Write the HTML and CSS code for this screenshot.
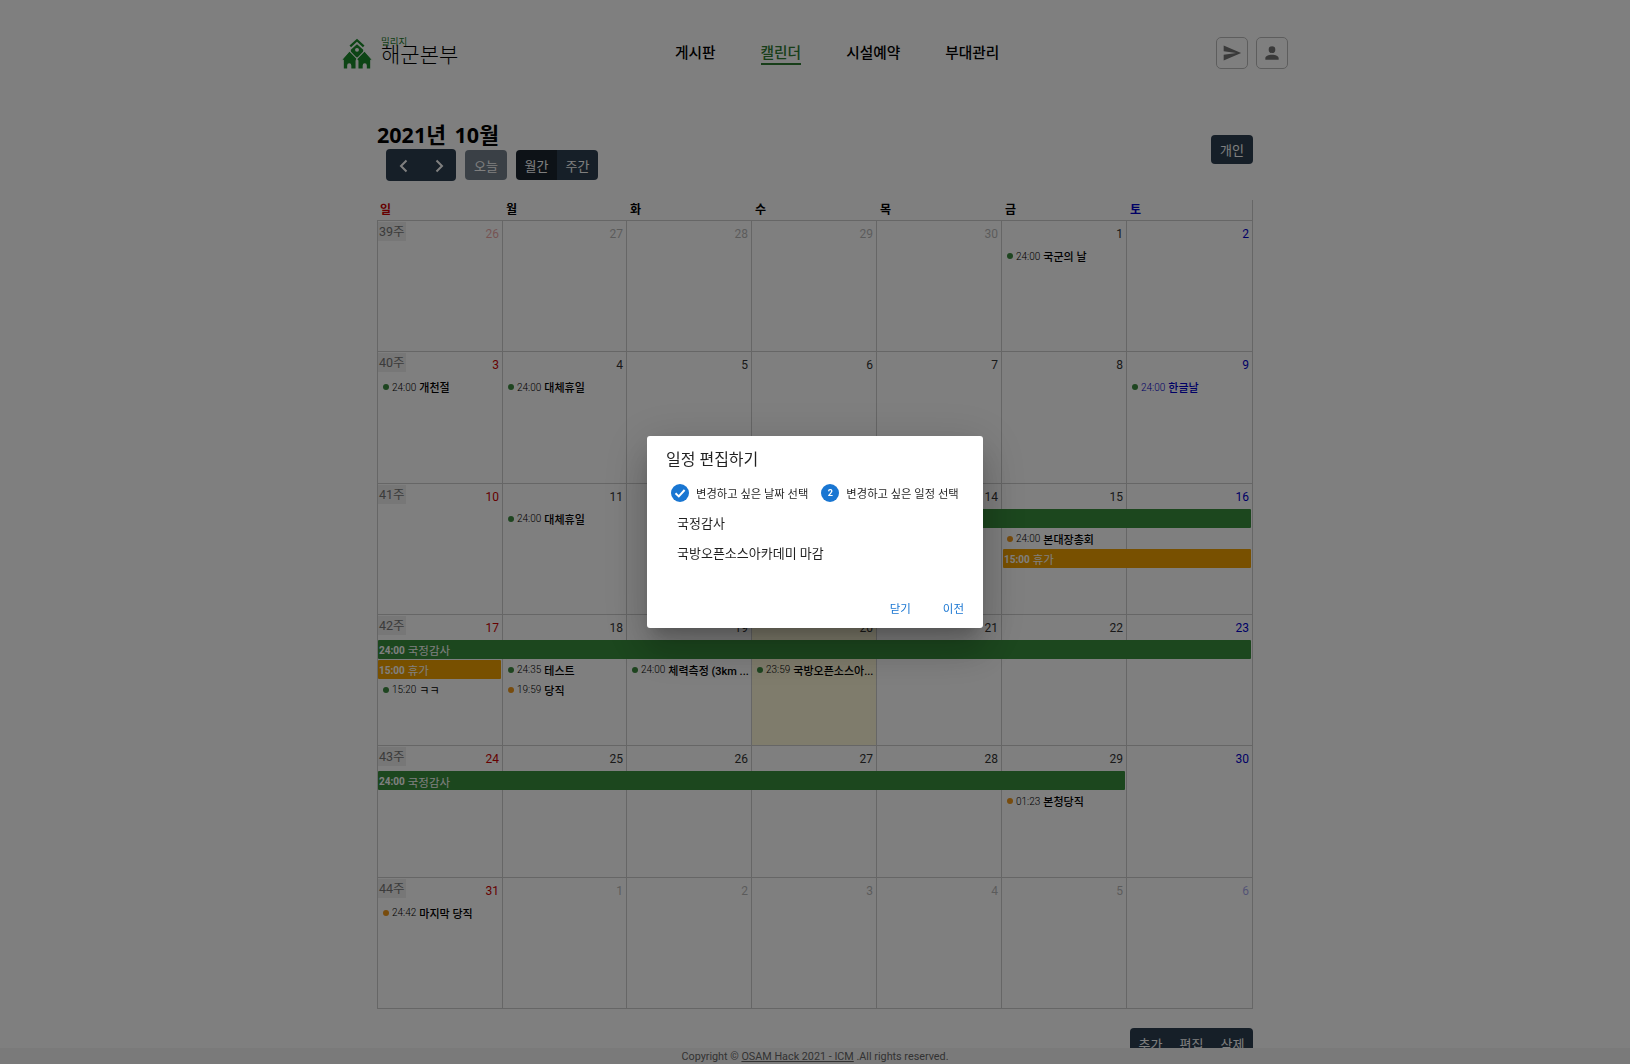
FILE: index.html
```html
<!DOCTYPE html>
<html lang="ko">
<head>
    <meta charset="UTF-8">
    <meta name="viewport" content="width=device-width, initial-scale=1.0">
    <title>밀리지 해군본부 - 캘린더</title>
    <link rel="stylesheet" href="styles.css">
</head>
<body>
    <header class="topbar">
        <a class="brand">
            <svg class="brand-logo" viewBox="0 0 29 29">
                <path d="M8 7.2 L14.5 1.2 L21 7.2" fill="none" stroke="#1b8a2a" stroke-width="2.2"/>
                <path d="M14.5 5 L20.5 10.5 V18 H8.5 V10.5 Z" fill="#1b8a2a"/>
                <circle cx="14.5" cy="10.5" r="1.9" fill="#fff"/>
                <path d="M7.2 11.5 L15 19.5 L13.6 20.9 V29 H1.2 V20.5 H-0.6 Z" fill="#1b8a2a" stroke="#fff" stroke-width="1"/>
                <path d="M21.8 11.5 L14 19.5 L15.4 20.9 V29 H27.8 V20.5 H29.6 Z" fill="#1b8a2a" stroke="#fff" stroke-width="1"/>
                <path d="M5 29 V25.5 A2 2 0 0 1 9 25.5 V29 Z M20 29 V25.5 A2 2 0 0 1 24 25.5 V29 Z" fill="#fff"/>
            </svg>
            <span class="brand-text">
                <span class="brand-sub">밀리지</span>
                <span class="brand-name">해군본부</span>
            </span>
        </a>
        <nav class="nav">
            <a>게시판</a>
            <a class="active">캘린더</a>
            <a>시설예약</a>
            <a>부대관리</a>
        </nav>
        <div class="top-actions">
            <button class="icon-btn"><svg viewBox="0 0 24 24"><path d="M2,21L23,12L2,3V10L17,12L2,14V21Z"/></svg></button>
            <button class="icon-btn"><svg viewBox="0 0 24 24"><path d="M12,4A4,4 0 0,1 16,8A4,4 0 0,1 12,12A4,4 0 0,1 8,8A4,4 0 0,1 12,4M12,14C16.42,14 20,15.79 20,18V20H4V18C4,15.79 7.58,14 12,14Z"/></svg></button>
        </div>
    </header>

    <main class="calendar">
        <div class="toolbar">
            <div class="toolbar-left">
                <h2>2021년 10월</h2>
                <div class="toolbar-btns">
                    <div class="btn-group arrows">
                        <button class="btn"><svg viewBox="0 0 16 16"><path d="M10.5 2.5 L5 8 L10.5 13.5"/></svg></button>
                        <button class="btn"><svg viewBox="0 0 16 16"><path d="M5.5 2.5 L11 8 L5.5 13.5"/></svg></button>
                    </div>
                    <button class="btn today" disabled>오늘</button>
                    <div class="btn-group">
                        <button class="btn on">월간</button>
                        <button class="btn">주간</button>
                    </div>
                </div>
            </div>
            <button class="btn personal">개인</button>
        </div>

        <div class="dow">
            <div class="sun">일</div><div>월</div><div>화</div><div>수</div><div>목</div><div>금</div><div class="sat">토</div>
        </div>

        <div class="week">
            <div class="day other sun"><span class="wk">39주</span><span class="num">26</span></div>
            <div class="day other"><span class="num">27</span></div>
            <div class="day other"><span class="num">28</span></div>
            <div class="day other"><span class="num">29</span></div>
            <div class="day other"><span class="num">30</span></div>
            <div class="day"><span class="num">1</span></div>
            <div class="day sat"><span class="num">2</span></div>
            <div class="ev c6 r1"><i class="dot"></i><span class="t">24:00</span><b>국군의 날</b></div>
        </div>

        <div class="week">
            <div class="day sun"><span class="wk">40주</span><span class="num">3</span></div>
            <div class="day"><span class="num">4</span></div>
            <div class="day"><span class="num">5</span></div>
            <div class="day"><span class="num">6</span></div>
            <div class="day"><span class="num">7</span></div>
            <div class="day"><span class="num">8</span></div>
            <div class="day sat"><span class="num">9</span></div>
            <div class="ev c1 r1"><i class="dot"></i><span class="t">24:00</span><b>개천절</b></div>
            <div class="ev c2 r1"><i class="dot"></i><span class="t">24:00</span><b>대체휴일</b></div>
            <div class="ev c7 r1 blue"><i class="dot"></i><span class="t">24:00</span><b>한글날</b></div>
        </div>

        <div class="week">
            <div class="day sun"><span class="wk">41주</span><span class="num">10</span></div>
            <div class="day"><span class="num">11</span></div>
            <div class="day"><span class="num">12</span></div>
            <div class="day"><span class="num">13</span></div>
            <div class="day"><span class="num">14</span></div>
            <div class="day"><span class="num">15</span></div>
            <div class="day sat"><span class="num">16</span></div>
            <div class="ev c2 r1"><i class="dot"></i><span class="t">24:00</span><b>대체휴일</b></div>
            <div class="bar green s4-7 r1"></div>
            <div class="ev c6 r2"><i class="dot orange"></i><span class="t">24:00</span><b>본대장총회</b></div>
            <div class="bar orange s6-7 r3"><b>15:00</b><span>휴가</span></div>
        </div>

        <div class="week">
            <div class="day sun"><span class="wk">42주</span><span class="num">17</span></div>
            <div class="day"><span class="num">18</span></div>
            <div class="day"><span class="num">19</span></div>
            <div class="day now"><span class="num">20</span></div>
            <div class="day"><span class="num">21</span></div>
            <div class="day"><span class="num">22</span></div>
            <div class="day sat"><span class="num">23</span></div>
            <div class="bar green s1-7 r1"><b>24:00</b><span>국정감사</span></div>
            <div class="bar orange c1 r2"><b>15:00</b><span>휴가</span></div>
            <div class="ev c1 r3"><i class="dot"></i><span class="t">15:20</span><span class="plain">ㅋㅋ</span></div>
            <div class="ev c2 r2"><i class="dot"></i><span class="t">24:35</span><b>테스트</b></div>
            <div class="ev c2 r3"><i class="dot orange"></i><span class="t">19:59</span><b>당직</b></div>
            <div class="ev c3 r2"><i class="dot"></i><span class="t">24:00</span><b>체력측정 (3km ...</b></div>
            <div class="ev c4 r2"><i class="dot"></i><span class="t">23:59</span><b>국방오픈소스아...</b></div>
        </div>

        <div class="week">
            <div class="day sun"><span class="wk">43주</span><span class="num">24</span></div>
            <div class="day"><span class="num">25</span></div>
            <div class="day"><span class="num">26</span></div>
            <div class="day"><span class="num">27</span></div>
            <div class="day"><span class="num">28</span></div>
            <div class="day"><span class="num">29</span></div>
            <div class="day sat"><span class="num">30</span></div>
            <div class="bar green s1-6 r1"><b>24:00</b><span>국정감사</span></div>
            <div class="ev c6 r2"><i class="dot orange"></i><span class="t">01:23</span><b>본청당직</b></div>
        </div>

        <div class="week">
            <div class="day sun"><span class="wk">44주</span><span class="num">31</span></div>
            <div class="day other"><span class="num">1</span></div>
            <div class="day other"><span class="num">2</span></div>
            <div class="day other"><span class="num">3</span></div>
            <div class="day other"><span class="num">4</span></div>
            <div class="day other"><span class="num">5</span></div>
            <div class="day other sat"><span class="num">6</span></div>
            <div class="ev c1 r1"><i class="dot orange"></i><span class="t">24:42</span><b>마지막 당직</b></div>
        </div>

        <div class="cal-actions">
            <div class="btn-group">
                <button class="btn">추가</button>
                <button class="btn">편집</button>
                <button class="btn">삭제</button>
            </div>
        </div>
    </main>

    <footer class="footer">Copyright © <a>OSAM Hack 2021 - ICM</a> .All rights reserved.</footer>

    <div class="overlay"></div>

    <div class="dialog">
        <div class="dialog-title">일정 편집하기</div>
        <div class="steps">
            <div class="step">
                <span class="step-num"><svg viewBox="0 0 18 18"><path d="M4.5 9.3 L7.8 12.4 L13.6 6"/></svg></span>
                <span>변경하고 싶은 날짜 선택</span>
            </div>
            <div class="step">
                <span class="step-num">2</span>
                <span>변경하고 싶은 일정 선택</span>
            </div>
        </div>
        <ul class="dialog-list">
            <li>국정감사</li>
            <li>국방오픈소스아카데미 마감</li>
        </ul>
        <div class="dialog-actions">
            <a>닫기</a>
            <a>이전</a>
        </div>
    </div>
</body>
</html>
```

FILE: styles.css
```css
* {
    box-sizing: border-box;
}
html, body {
    height: 100%;
}
body {
    margin: 0;
    background-color: #fff;
    color: #000;
    font-family: Roboto, "Noto Sans CJK KR", sans-serif;
    overflow: hidden;
}
button {
    font-family: inherit;
}

/* top bar */
.topbar {
    display: flex;
    align-items: center;
    justify-content: space-between;
    width: 946px;
    height: 106px;
    margin: 0 auto;
}
.brand {
    display: flex;
    align-items: center;
    gap: 8px;
    padding-top: 2px;
}
.brand-logo {
    width: 30px;
    height: 30px;
    display: block;
    overflow: visible;
}
.brand-text {
    position: relative;
    display: block;
}
.brand-sub {
    position: absolute;
    top: -1px;
    left: 1px;
    font-size: 9.5px;
    line-height: 10px;
    color: #1b7a2a;
}
.brand-name {
    font-size: 21px;
    line-height: 30px;
    font-weight: 300;
    display: block;
    padding: 2px 0 0 1px;
}
.nav {
    display: flex;
    gap: 45px;
    padding-top: 2px;
}
.nav a {
    font-size: 14.7px;
    line-height: 20px;
    font-weight: 500;
}
.nav a.active {
    color: #2e7d32;
    border-bottom: 2px solid #2e7d32;
}
.top-actions {
    display: flex;
    gap: 8px;
}
.icon-btn {
    width: 32px;
    height: 32px;
    padding: 0;
    background: none;
    border: 1px solid #bbb;
    border-radius: 5px;
    display: flex;
    align-items: center;
    justify-content: center;
}
.icon-btn svg {
    width: 20px;
    height: 20px;
    fill: #757575;
}

/* calendar */
.calendar {
    width: 876px;
    margin: 0 0 0 377px;
}
.toolbar {
    display: flex;
    justify-content: space-between;
    align-items: flex-start;
    height: 94px;
    padding-top: 14px;
}
.toolbar h2 {
    margin: 0;
    font-family: "Noto Sans", "Noto Sans CJK KR", sans-serif;
    font-size: 21.5px;
    line-height: 29px;
    font-weight: 700;
    word-spacing: 3px;
}
.toolbar-btns {
    display: flex;
    align-items: center;
    gap: 9px;
    margin-left: 9px;
}
.btn {
    height: 30px;
    padding: 0 8px;
    border: none;
    background-color: #2c3e50;
    color: #fff;
    font-size: 13px;
    border-radius: 4px;
}
.btn.on {
    background-color: #1a252f;
}
.btn.today {
    opacity: 0.65;
    width: 42px;
    padding: 0;
}
.btn.personal {
    width: 42px;
    height: 29px;
    padding: 0;
    margin-top: 15px;
}
.btn-group {
    display: flex;
}
.btn-group .btn {
    width: 41px;
    padding: 0;
    border-radius: 0;
}
.btn-group .btn:first-child {
    border-radius: 4px 0 0 4px;
}
.btn-group .btn:last-child {
    border-radius: 0 4px 4px 0;
}
.arrows .btn {
    height: 32px;
}
.btn-group.arrows .btn {
    width: 35px;
}
.arrows svg {
    width: 16px;
    height: 16px;
    display: block;
    margin: 1px auto 0;
    fill: none;
    stroke: #fff;
    stroke-width: 2;
}

.dow {
    display: grid;
    grid-template-columns: 126px 124px repeat(4, 125px) 126px;
    height: 21px;
    border-right: 1px solid #ccc;
    border-bottom: 1px solid #ccc;
    font-size: 12px;
    font-weight: 700;
    line-height: 21px;
}
.dow div {
    padding-left: 3px;
}
.dow .sun {
    color: #c00;
}
.dow .sat {
    color: #00c;
}

.week {
    display: grid;
    grid-template-columns: 126px 124px repeat(4, 125px) 126px;
    grid-template-rows: 25px 20px 20px 20px 1fr;
    height: 131.33px;
    border-bottom: 1px solid #ccc;
}
.day {
    grid-row: 1 / -1;
    display: flex;
    justify-content: space-between;
    align-items: flex-start;
    border-right: 1px solid #ccc;
    padding: 3px 3px 0 0;
}
.day:nth-child(1) {
    grid-column: 1;
    border-left: 1px solid #ccc;
}
.day:nth-child(2) { grid-column: 2; }
.day:nth-child(3) { grid-column: 3; }
.day:nth-child(4) { grid-column: 4; }
.day:nth-child(5) { grid-column: 5; }
.day:nth-child(6) { grid-column: 6; }
.day:nth-child(7) { grid-column: 7; }
.day.now {
    background-color: rgba(255, 235, 130, 0.3);
}
.num {
    margin-left: auto;
    font-size: 12px;
    line-height: 20px;
    color: #333;
}
.day.sun .num {
    color: #c00;
}
.day.sat .num {
    color: #00c;
}
.day.other .num {
    opacity: 0.35;
}
.wk {
    margin-top: -2px;
    padding: 0 1px;
    background-color: #eee;
    color: #777;
    font-size: 12.5px;
    line-height: 19px;
}

.c1 { grid-column: 1; }
.c2 { grid-column: 2; }
.c3 { grid-column: 3; }
.c4 { grid-column: 4; }
.c6 { grid-column: 6; }
.c7 { grid-column: 7; }
.s1-7 { grid-column: 1 / 8; }
.s1-6 { grid-column: 1 / 7; }
.s4-7 { grid-column: 4 / 8; }
.s6-7 { grid-column: 6 / 8; }
.r1 { grid-row: 2; }
.r2 { grid-row: 3; }
.r3 { grid-row: 4; }

.ev {
    display: flex;
    align-items: center;
    min-width: 0;
    height: 20px;
    padding: 0 3px 0 5px;
    font-size: 10px;
    white-space: nowrap;
    overflow: hidden;
}
.ev.c1 {
    padding-left: 6px;
}
.ev b {
    font-size: 11px;
    font-weight: 500;
}
.ev .plain {
    font-size: 11px;
}
.ev .t {
    margin-right: 3px;
    flex: none;
    font-weight: 300;
}
.ev.blue {
    color: #00c;
}
.dot {
    flex: none;
    width: 6px;
    height: 6px;
    margin-right: 3px;
    border-radius: 50%;
    background-color: #3d8b40;
}
.dot.orange {
    background-color: #f0981a;
}
.bar {
    display: flex;
    align-items: center;
    gap: 3px;
    height: 19px;
    margin: 0 2px 0 1px;
    padding: 2px 0 0 1px;
    border-radius: 1px;
    color: #fff;
    font-size: 11.5px;
    white-space: nowrap;
    overflow: hidden;
}
.bar b {
    font-size: 10px;
}
.bar.green {
    background-color: #388e3c;
}
.bar.orange {
    background-color: #f0a000;
}

.cal-actions {
    display: flex;
    justify-content: flex-end;
    margin-top: 19px;
}
.cal-actions .btn {
    height: 32px;
}

.footer {
    position: fixed;
    left: 0;
    right: 0;
    bottom: 0;
    height: 16px;
    background-color: #f5f5f5;
    color: #666;
    font-size: 10.8px;
    line-height: 17px;
    text-align: center;
}
.footer a {
    text-decoration: underline;
}

/* dialog */
.overlay {
    position: fixed;
    inset: 0;
    background-color: rgba(0, 0, 0, 0.5);
}
.dialog {
    position: fixed;
    left: 647px;
    top: 436px;
    width: 336px;
    height: 192px;
    padding: 14px 19px 0;
    background-color: #fff;
    border-radius: 3px;
    box-shadow: 0 11px 15px -7px rgba(0, 0, 0, 0.2), 0 24px 38px 3px rgba(0, 0, 0, 0.14), 0 9px 46px 8px rgba(0, 0, 0, 0.12);
    display: flex;
    flex-direction: column;
    color: rgba(0, 0, 0, 0.87);
}
.dialog-title {
    font-size: 16px;
    line-height: 20px;
}
.steps {
    display: flex;
    gap: 13px;
    margin: 14px 0 0 5px;
}
.step {
    display: flex;
    align-items: center;
    gap: 7px;
    font-size: 11.3px;
    white-space: nowrap;
}
.step-num {
    width: 18px;
    height: 18px;
    flex: none;
    border-radius: 50%;
    background-color: #1976d2;
    color: #fff;
    font-size: 9px;
    font-weight: 700;
    text-align: center;
    line-height: 18px;
}
.step-num svg {
    width: 18px;
    height: 18px;
    display: block;
    fill: none;
    stroke: #fff;
    stroke-width: 2;
}
.dialog-list {
    list-style: none;
    margin: 7px 0 0 11px;
    padding: 0;
    font-size: 13px;
    line-height: 30px;
}
.dialog-actions {
    display: flex;
    justify-content: flex-end;
    gap: 32px;
    margin-top: auto;
    padding-bottom: 11px;
    font-size: 11.5px;
    line-height: 16px;
    color: #1976d2;
}
```
